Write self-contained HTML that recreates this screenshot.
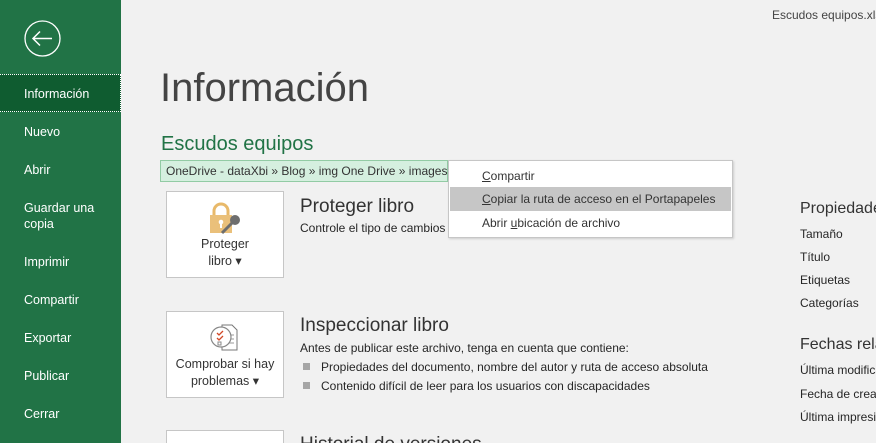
<!DOCTYPE html>
<html style="width:876px;height:443px;overflow:hidden"><head><meta charset="utf-8"><style>
*{margin:0;padding:0;box-sizing:border-box}
body{width:876px;height:443px;overflow:hidden;background:#f1f1f1;font-family:"Liberation Sans",sans-serif;position:relative;color:#262626}
.side{position:absolute;left:0;top:0;width:121px;height:443px;background:#217346}
.nav{position:absolute;left:24px;color:#fff;font-size:12.5px;line-height:16px}
.sel{position:absolute;left:0;top:74px;width:121px;height:38px;background:#0f5c30;border-top:1px dotted #fff;border-bottom:1px dotted #fff;border-right:1px dotted #fff}
.a{position:absolute;white-space:nowrap}
.box{position:absolute;left:166px;width:118px;height:87px;background:#fff;border:1px solid #c6c6c6;text-align:center;font-size:12.5px;line-height:17px;color:#333}
.sq{display:inline-block;width:7px;height:7px;background:#a6a6a6;margin-right:11px;vertical-align:1px}
</style></head><body>
<div class="side">
<svg style="position:absolute;left:24px;top:20px" width="37" height="37" viewBox="0 0 37 37"><circle cx="18.5" cy="18.5" r="17.5" fill="none" stroke="#fff" stroke-width="1.3"/><path d="M9 18.5H28M16 11.5L9 18.5L16 25.5" fill="none" stroke="#fff" stroke-width="1.5"/></svg>
<div class="sel"></div>
<div class="nav" style="top:86px">Información</div>
<div class="nav" style="top:124px">Nuevo</div>
<div class="nav" style="top:162px">Abrir</div>
<div class="nav" style="top:200px">Guardar una<br>copia</div>
<div class="nav" style="top:254px">Imprimir</div>
<div class="nav" style="top:292px">Compartir</div>
<div class="nav" style="top:330px">Exportar</div>
<div class="nav" style="top:368px">Publicar</div>
<div class="nav" style="top:406px">Cerrar</div>
</div>
<div class="a" style="left:772px;top:8px;font-size:12px;color:#444">Escudos equipos.xls</div>
<div class="a" style="left:160px;top:66px;font-size:40px;color:#444">Información</div>
<div class="a" style="left:161px;top:133px;font-size:20px;color:#217346">Escudos equipos</div>
<div class="a" style="left:160px;top:160px;width:288px;height:22px;background:#d5efdf;border:1px solid #92cba4;font-size:12px;line-height:20px;padding-left:5px;color:#333">OneDrive - dataXbi » Blog » img One Drive » images</div>
<div class="box" style="top:191px">
<svg style="position:absolute;left:41px;top:10px" width="36" height="33" viewBox="0 0 36 33"><path d="M6 13V9a7 7 0 0 1 14 0v4" fill="none" stroke="#e8b96a" stroke-width="3"/><rect x="2" y="13" width="22" height="18" fill="#eac07a"/><circle cx="13" cy="20" r="2.3" fill="#fff"/><rect x="12" y="20" width="2" height="6" fill="#fff"/><path d="M14 31L24 21" stroke="#6e6e6e" stroke-width="3"/><circle cx="27" cy="18" r="5" fill="#6e6e6e"/></svg>
<div style="position:absolute;left:0;right:0;top:44px">Proteger<br>libro ▾</div>
</div>
<div class="a" style="left:300px;top:196px;font-size:19px;color:#333">Proteger libro</div>
<div class="a" style="left:300px;top:221px;font-size:12px">Controle el tipo de cambios</div>
<div class="box" style="top:311px">
<svg style="position:absolute;left:41px;top:11px" width="34" height="32" viewBox="0 0 34 32"><path d="M14 2h10l5 5v20H14z" fill="#fff" stroke="#777"/><path d="M19 12h7M19 16h7M19 20h7" stroke="#999"/><circle cx="13" cy="14" r="10" fill="#fff" stroke="#888" stroke-width="1.2"/><path d="M9 10l2 2 4-4M9 15l2 2 4-4" fill="none" stroke="#d24726" stroke-width="1.3"/><rect x="10" y="19" width="3" height="3" fill="none" stroke="#888"/></svg>
<div style="position:absolute;left:0;right:0;top:44px">Comprobar si hay<br>problemas ▾</div>
</div>
<div class="a" style="left:300px;top:315px;font-size:19px;color:#333">Inspeccionar libro</div>
<div class="a" style="left:300px;top:341px;font-size:12px">Antes de publicar este archivo, tenga en cuenta que contiene:</div>
<div class="a" style="left:303px;top:360px;font-size:12px"><span class="sq"></span>Propiedades del documento, nombre del autor y ruta de acceso absoluta</div>
<div class="a" style="left:303px;top:379px;font-size:12px"><span class="sq"></span>Contenido difícil de leer para los usuarios con discapacidades</div>
<div class="box" style="top:430px;height:13px;border-bottom:none"></div>
<div style="position:absolute;left:300px;top:430px;width:300px;height:13px;overflow:hidden"><div class="a" style="left:0;top:4px;font-size:19px;color:#333">Historial de versiones</div></div>
<div class="a" style="left:448px;top:160px;width:285px;height:78px;background:#fff;border:1px solid #c6c6c6;box-shadow:1px 1px 2px rgba(0,0,0,.15);font-size:12px;color:#333">
<div style="position:absolute;left:33px;top:8px"><u>C</u>ompartir</div>
<div style="position:absolute;left:1px;top:26px;width:281px;height:24px;background:#c6c6c6"></div>
<div style="position:absolute;left:33px;top:31px"><u>C</u>opiar la ruta de acceso en el Portapapeles</div>
<div style="position:absolute;left:33px;top:55px">Abrir <u>u</u>bicación de archivo</div>
</div>
<div style="position:absolute;left:790px;top:190px;width:86px;height:253px;overflow:hidden">
<div class="a" style="left:10px;top:10px;font-size:16px;color:#333">Propiedades</div>
<div class="a" style="left:10px;top:37px;font-size:12px">Tamaño</div>
<div class="a" style="left:10px;top:60px;font-size:12px">Título</div>
<div class="a" style="left:10px;top:83px;font-size:12px">Etiquetas</div>
<div class="a" style="left:10px;top:106px;font-size:12px">Categorías</div>
<div class="a" style="left:10px;top:146px;font-size:16px;color:#333">Fechas relacionadas</div>
<div class="a" style="left:10px;top:173px;font-size:12px">Última modificación</div>
<div class="a" style="left:10px;top:197px;font-size:12px">Fecha de creación</div>
<div class="a" style="left:10px;top:220px;font-size:12px">Última impresión</div>
</div>
</body></html>
